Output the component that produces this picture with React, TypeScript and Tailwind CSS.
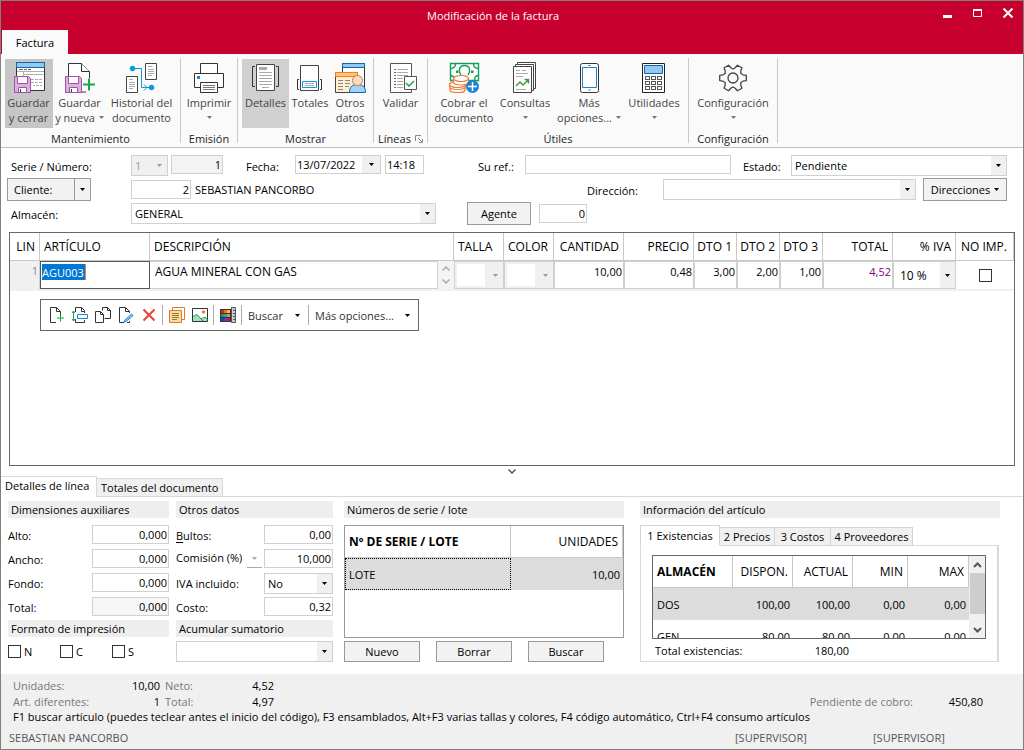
import React, { useState } from "react";

type IconProps = { children: React.ReactNode };

const Icon = ({ children }: IconProps) => (
  <svg width="32" height="32" viewBox="0 0 32 32" fill="none" strokeWidth="1" aria-hidden="true" className="shrink-0">
    {children}
  </svg>
);

const Arrow = ({ color = "#000" }: { color?: string }) => (
  <svg width="5" height="3" viewBox="0 0 5 3" aria-hidden="true" className="shrink-0">
    <path d="M0 0h5L2.5 3z" fill={color} />
  </svg>
);

const Floppy = () => (
  <g>
    <path d="M1.5 15.5h14l2 2v14h-16z" fill="#dfb0dd" stroke="#a052a8" />
    <path d="M4.5 15.5h10v7h-10z" fill="#fff" stroke="#a052a8" />
    <path d="M5.5 31.5v-5h8v5z" fill="#fff" stroke="#a052a8" />
    <path d="M7.5 28v3" stroke="#444" />
  </g>
);

const SaveCloseIcon = () => (
  <Icon>
    <path d="M3.5 1.5h28v28h-28z" fill="#fff" stroke="#333" />
    <path d="M3.5 1.5h28v5h-28z" fill="#92c9f0" stroke="#1565a8" />
    <path d="M6 8.5h4M11 8.5h3M15 8.5h3" stroke="#666" />
    <path d="M4 10.5h27M10.5 10.5v5M10.5 13.5h20" stroke="#b0b0b0" />
    <path d="M18 18.5h3M22 18.5h3M26 18.5h3M18 21.5h3M22 21.5h3M26 21.5h3M20 24.5h2M23 24.5h3M27 24.5h2" stroke="#aaa" />
    <Floppy />
  </Icon>
);

const SaveNewIcon = () => (
  <Icon>
    <path d="M4.5 2.5h13l8 8v20.5h-21z" fill="#fff" stroke="#333" />
    <path d="M17.5 2.5v8h8" fill="#fff" stroke="#333" />
    <path d="M19 21h13v5H19zM22 17h6v15h-6z" fill="#fafafa" />
    <Floppy />
    <path d="M19 23.5h12M25 17.5v12" stroke="#13a84b" strokeWidth="2" />
  </Icon>
);

const HistoryIcon = () => (
  <Icon>
    <path d="M19.5 2.5h11v16h-11zM.5 15.5h11v16H.5z" fill="#fff" stroke="#444" />
    <path d="M22 5.5h4M22 8.5h6M22 10.5h6M22 12.5h6M22 14.5h4M3 18.5h4M3 21.5h6M3 23.5h6M3 25.5h6M3 27.5h4" stroke="#aaa" />
    <path d="M7 7.5h8.5v19H26M18 23.5l3 3-3 3" stroke="#0a9be0" />
    <circle cx="6.5" cy="7.5" r="2.7" fill="#0a9be0" />
    <circle cx="25.5" cy="26.5" r="2.7" fill="#0a9be0" />
  </Icon>
);

const PrintIcon = () => (
  <Icon>
    <path d="M7.5 12.5v-10h17v10" fill="#fff" stroke="#333" />
    <path d="M1.5 12.5h29v14h-29z" fill="#fff" stroke="#333" />
    <path d="M7.5 21.5h17v10h-17z" fill="#fff" stroke="#333" />
    <path d="M10 24.5h12M10 26.5h12M10 28.5h12" stroke="#777" />
    <path d="M4 15h3v3H4z" fill="#1b84cf" />
  </Icon>
);

const DetailsIcon = () => (
  <Icon>
    <path d="M6.5 3.5h18v26h-18z" fill="#fff" stroke="#444" />
    <path d="M9 6h8v3H9z" fill="#aaa" />
    <path d="M9 11.5h13M9 14.5h13M9 17.5h13M9 20.5h13M9 23.5h13M12 26.5h7" stroke="#aaa" />
    <path d="M5 5.5H2.5v20H5M26 5.5h2.5v20H26" stroke="#333" />
  </Icon>
);

const TotalsIcon = () => (
  <Icon>
    <path d="M6.5 4.5h18v25h-18z" fill="#fff" stroke="#444" />
    <path d="M8.5 20.5h14v6h-14z" stroke="#0a9be0" />
    <path d="M11 22.5h9M11 24.5h9" stroke="#aaa" />
    <path d="M5 18.5H3.5v10H5M26 18.5h1.5v10H26" stroke="#333" />
  </Icon>
);

const OtherDataIcon = () => (
  <Icon>
    <path d="M8.5 2.5h22v26h-22z" fill="#fff" stroke="#333" />
    <path d="M8.5 2.5h22v4h-22z" fill="#92c9f0" stroke="#1565a8" />
    <path d="M1.5 11.5h22v20h-22z" fill="#fdf0d0" stroke="#444" />
    <path d="M1.5 11.5h22v4h-22z" fill="#fdc27e" stroke="#f08020" />
    <path d="M4 19.5h5M11 19.5h5M4 22.5h5M11 22.5h5M4 25.5h5M11 25.5h4M4 28.5h5" stroke="#888" />
    <path d="M15.5 31.5c0-6 3-8 8-8s8 2 8 8z" fill="#a8d0f2" stroke="#1565a8" />
    <circle cx="23.5" cy="19.5" r="5" fill="#fbdcc0" stroke="#b98052" />
  </Icon>
);

const ValidateIcon = () => (
  <Icon>
    <path d="M5.5 2.5h21v29h-21z" fill="#fff" stroke="#555" />
    <path d="M9 8.5h2M9 14.5h2M9 20.5h2M9 26.5h2" stroke="#13a84b" />
    <path d="M9 11.5h2M9 17.5h2M9 23.5h2" stroke="#c03030" />
    <path d="M12 8.5h11M12 11.5h11M12 14.5h11M12 17.5h6M12 20.5h6M12 23.5h6M12 26.5h6" stroke="#aaa" />
    <path d="M19.5 15.5h12v13h-12z" fill="#fff" stroke="#555" />
    <path d="M21 22l3 3 5-5" stroke="#13a84b" strokeWidth="1.5" />
  </Icon>
);

const CashIcon = () => (
  <Icon>
    <path d="M2.5 2.5h28v17h-28z" fill="#fff" stroke="#13a05a" strokeWidth="1.4" />
    <path
      d="M2.5 7.500c3 0 5-2 5-5M25.500 2.500c0 3 2 5 5 5M30.500 14.500c-3 0-4 2-4 5M2.500 14.500c2 0 3 1 4 3M13 14c-3-4-2-9.500 3.500-9.500S23 10 20 14"
      stroke="#13a05a"
      strokeWidth="1.4"
    />
    <path d="M8 9.500h2.500v2.500H8zM23 9.500h2.500v2.500H23z" fill="#13a05a" />
    <g fill="#fff" stroke="#ef7a3a" strokeWidth="1.200">
      <path d="M2 27v2c0 3 14 4 15 0v-2z" />
      <path d="M1.500 23v2.500c0 4 16 4 16 0V23z" />
      <ellipse cx="9.500" cy="23.500" rx="8" ry="3" />
      <path d="M5.500 17.500V21c0 4 15 4 15 0v-3.500z" />
      <ellipse cx="13" cy="17.500" rx="7.500" ry="3" />
    </g>
    <circle cx="24.500" cy="25.500" r="6.500" fill="#1b84cf" />
    <path d="M20 25.500h9M24.500 21v9" stroke="#fff" strokeWidth="1.500" />
  </Icon>
);

const QueriesIcon = () => (
  <Icon>
    <path d="M8.5 1.5h18v26h-18z" fill="#fff" stroke="#444" />
    <path d="M6.5 3.5h18v26h-18z" fill="#fff" stroke="#444" />
    <path d="M4.5 5.5h18v26h-18z" fill="#fff" stroke="#444" />
    <path d="M7 9.5h4M13 9.5h4M7 12.5h12M7 15.5h7M7 28.5h10" stroke="#aaa" />
    <path d="M7 25l4-4 3 3 5-5M15.5 18.5h4v4" stroke="#3a9a3a" strokeWidth="1.4" />
  </Icon>
);

const TabletIcon = () => (
  <Icon>
    <rect x="7.5" y="2.5" width="18" height="29" rx="2" fill="#fff" stroke="#333" />
    <path d="M9.5 6.5h14v20h-14z" fill="#fff" stroke="#1b84cf" />
    <path d="M15 4.5h3M15 29h3" stroke="#888" />
  </Icon>
);

const CalculatorIcon = () => (
  <Icon>
    <path d="M4.5 2.5h22v29h-22z" fill="#fff" stroke="#222" />
    <path d="M6.5 4.5h18v8h-18z" fill="#92c9f0" stroke="#1565a8" />
    {[15.5, 20.5, 25.5].map((y) =>
      [7.5, 13.5, 19.5].map((x) => (
        <rect key={`${x}-${y}`} x={x} y={y} width="4" height="3" stroke="#555" />
      ))
    )}
  </Icon>
);

const gearPoints = [0, 60, 120, 180, 240, 300]
  .flatMap((base) =>
    [
      [-30, 9],
      [-18, 10.5],
      [-11, 13.5],
      [11, 13.5],
      [18, 10.5],
    ].map(([offset, radius]) => {
      const angle = ((base + offset) * Math.PI) / 180;
      return `${(16 + radius * Math.cos(angle)).toFixed(1)},${(17 + radius * Math.sin(angle)).toFixed(1)}`;
    })
  )
  .join(" ");

const GearIcon = () => (
  <Icon>
    <polygon points={gearPoints} stroke="#444" strokeWidth="1.3" strokeLinejoin="round" />
    <circle cx="16" cy="17" r="5" stroke="#444" strokeWidth="1.3" />
  </Icon>
);

type RibbonButtonProps = {
  icon: React.ReactNode;
  lines: string[];
  width: string;
  active?: string;
  menu?: boolean;
};

const RibbonButton = ({ icon, lines, width, active = "", menu }: RibbonButtonProps) => (
  <button
    type="button"
    className={`flex h-[69px] shrink-0 flex-col items-center pt-[2px] leading-[15px] whitespace-nowrap text-[#444] ${width} ${active}`}
  >
    {icon}
    <span className="mt-[2px]">{lines[0]}</span>
    <span className="flex h-[15px] items-center gap-1">
      {lines[1]}
      {menu && <Arrow color="#777" />}
    </span>
  </button>
);

type RibbonGroupProps = {
  label: string;
  width: string;
  launcher?: boolean;
  children: React.ReactNode;
};

const RibbonGroup = ({ label, width, launcher, children }: RibbonGroupProps) => (
  <section aria-label={label} className={`my-1 flex shrink-0 flex-col border-r border-[#c8c8c8] pt-px ${width}`}>
    <div className="flex justify-center">{children}</div>
    <div className="mt-[3px] flex h-[15px] items-center justify-center gap-1 text-[#222]">
      {label}
      {launcher && (
        <svg width="8" height="8" viewBox="0 0 8 8" fill="none" stroke="#888" aria-hidden="true">
          <path d="M.5 6V.5H6M3 3l4 4M7.5 4v3.5H4" />
        </svg>
      )}
    </div>
  </section>
);

type SelectProps = {
  id?: string;
  label?: string;
  value: string;
  className: string;
  disabled?: boolean;
};

const Select = ({ id, label, value, className, disabled }: SelectProps) => (
  <div className={`relative h-[21px] border border-[#d0d0d0] ${disabled ? "bg-[#f0f0f0] text-[#999]" : "bg-white"} ${className}`}>
    <select
      id={id}
      aria-label={label}
      disabled={disabled}
      defaultValue={value}
      className="block h-full w-full appearance-none pr-4 pl-[3px] outline-none"
    >
      <option>{value}</option>
    </select>
    <span className="pointer-events-none absolute inset-y-0 right-0 flex w-[15px] items-center justify-center bg-[#f0f0f0]">
      <Arrow color={disabled ? "#999" : "#000"} />
    </span>
  </div>
);

type FieldProps = {
  id?: string;
  label?: string;
  value: string;
  className: string;
};

const Field = ({ id, label, value, className }: FieldProps) => (
  <input
    id={id}
    aria-label={label}
    defaultValue={value}
    className={`h-[19px] min-w-0 border border-[#d0d0d0] px-[1px] pb-px outline-none ${className}`}
  />
);

const PushButton = ({ children, className }: { children: React.ReactNode; className: string }) => (
  <button type="button" className={`flex items-center justify-center border border-[#999] bg-[#f2f2f2] ${className}`}>
    {children}
  </button>
);

const SectionTitle = ({ children }: { children: React.ReactNode }) => (
  <h2 className="h-[17px] bg-[#eee] pl-[3px] leading-[17px]">{children}</h2>
);

const TitleBar = () => (
  <header className="bg-[#c8002d] text-white">
    <div className="flex h-[29px] items-center pl-[52px]">
      <h1 className="flex-1 text-center">Modificación de la factura</h1>
      <div className="flex pb-[5px]">
        <button type="button" aria-label="Minimizar" className="flex h-6 w-[30px] items-center justify-center">
          <svg width="10" height="10" viewBox="0 0 10 10">
            <path d="M0 7h9v3H0z" fill="#fff" />
          </svg>
        </button>
        <button type="button" aria-label="Maximizar" className="flex h-6 w-[30px] items-center justify-center">
          <svg width="10" height="10" viewBox="0 0 10 10" fill="none" stroke="#fff">
            <path d="M.5 1.5h8v7h-8z" />
            <path d="M0 2h9" strokeWidth="2" />
          </svg>
        </button>
        <button type="button" aria-label="Cerrar" className="flex h-6 w-[30px] items-center justify-center">
          <svg width="10" height="10" viewBox="0 0 10 10" fill="none" stroke="#fff" strokeWidth="2">
            <path d="M.5.5l9 9M9.5.5l-9 9" />
          </svg>
        </button>
      </div>
    </div>
    <nav className="flex pl-px">
      <button type="button" className="h-6 w-[66px] bg-[#fafafa] text-black">
        Factura
      </button>
    </nav>
  </header>
);

const Ribbon = () => (
  <div className="flex h-[94px] border-b border-[#c0c0c0] bg-[#fafafa]">
    <RibbonGroup label="Mantenimiento" width="w-[180px]">
      <RibbonButton icon={<SaveCloseIcon />} lines={["Guardar", "y cerrar"]} width="w-12" active="bg-[#c6c6c6]" />
      <RibbonButton icon={<SaveNewIcon />} lines={["Guardar", "y nueva"]} width="w-[54px]" menu />
      <RibbonButton icon={<HistoryIcon />} lines={["Historial del", "documento"]} width="w-[70px]" />
    </RibbonGroup>
    <RibbonGroup label="Emisión" width="w-[57px]">
      <RibbonButton icon={<PrintIcon />} lines={["Imprimir", ""]} width="w-12" menu />
    </RibbonGroup>
    <RibbonGroup label="Mostrar" width="w-[136px]">
      <RibbonButton icon={<DetailsIcon />} lines={["Detalles", ""]} width="w-[47px]" active="bg-[#d0d0d0]" />
      <RibbonButton icon={<TotalsIcon />} lines={["Totales", ""]} width="w-[42px]" />
      <RibbonButton icon={<OtherDataIcon />} lines={["Otros", "datos"]} width="w-[38px]" />
    </RibbonGroup>
    <RibbonGroup label="Líneas" width="w-[54px]" launcher>
      <RibbonButton icon={<ValidateIcon />} lines={["Validar", ""]} width="w-12" />
    </RibbonGroup>
    <RibbonGroup label="Útiles" width="w-[261px]">
      <RibbonButton icon={<CashIcon />} lines={["Cobrar el", "documento"]} width="w-16" />
      <RibbonButton icon={<QueriesIcon />} lines={["Consultas", ""]} width="w-[58px]" menu />
      <RibbonButton icon={<TabletIcon />} lines={["Más", "opciones..."]} width="w-[70px]" menu />
      <RibbonButton icon={<CalculatorIcon />} lines={["Utilidades", ""]} width="w-[60px]" menu />
    </RibbonGroup>
    <RibbonGroup label="Configuración" width="w-[89px]">
      <RibbonButton icon={<GearIcon />} lines={["Configuración", ""]} width="w-20" menu />
    </RibbonGroup>
  </div>
);

const InvoiceForm = () => (
  <form className="flex flex-col gap-[3px] pt-[7px] pr-4 pb-2 pl-[10px]">
    <div className="flex h-[21px] items-start">
      <label htmlFor="serie" className="w-[120px] leading-[23px]">
        Serie / Número:
      </label>
      <Select id="serie" value="1" className="w-[37px]" disabled />
      <Field label="Número" value="1" className="ml-[3px] w-[52px] bg-[#f3f3f3] text-right" />
      <label htmlFor="fecha" className="ml-[23px] w-[49px] leading-[23px]">
        Fecha:
      </label>
      <div className="relative h-[19px] w-[86px] border border-[#d0d0d0]">
        <input id="fecha" defaultValue="13/07/2022" className="block h-[16px] w-full pl-px outline-none" />
        <span className="pointer-events-none absolute inset-y-0 right-0 flex w-[18px] items-center justify-center bg-[#f0f0f0]">
          <Arrow />
        </span>
      </div>
      <Field label="Hora" value="14:18" className="ml-1 w-[39px]" />
      <label htmlFor="ref" className="ml-[54px] w-[47px] leading-[23px]">
        Su ref.:
      </label>
      <Field id="ref" value="" className="flex-1" />
      <label htmlFor="estado" className="ml-3 w-12 leading-[23px]">
        Estado:
      </label>
      <Select id="estado" value="Pendiente" className="w-[216px]" />
    </div>
    <div className="flex h-[21px] items-center">
      <div className="-ml-1 flex h-[23px] w-[84px] border border-[#999] bg-[#f2f2f2]">
        <button type="button" className="flex-1 pl-[6px] text-left">
          Cliente:
        </button>
        <button type="button" aria-label="Opciones de cliente" className="flex w-4 items-center justify-center border-l border-[#999]">
          <Arrow />
        </button>
      </div>
      <Field label="Cliente" value="2" className="ml-10 w-[60px] text-right" />
      <span className="ml-1 w-[392px] pb-px">SEBASTIAN PANCORBO</span>
      <label htmlFor="direccion" className="w-[76px] pt-[2px]">
        Dirección:
      </label>
      <Select id="direccion" value="" className="flex-1" />
      <PushButton className="ml-[7px] h-[23px] w-[84px] gap-1">
        Direcciones
        <Arrow />
      </PushButton>
    </div>
    <div className="flex h-[21px] items-center">
      <label htmlFor="almacen" className="w-[120px] pt-[2px]">
        Almacén:
      </label>
      <Select id="almacen" value="GENERAL" className="w-[305px]" />
      <PushButton className="ml-[31px] h-[23px] w-16">Agente</PushButton>
      <Field label="Agente" value="0" className="ml-2 w-12 text-right" />
    </div>
  </form>
);

const columns = [
  { name: "LIN", width: "w-[30px]", align: "text-right pr-1" },
  { name: "ARTÍCULO", width: "w-[110px]", align: "text-left pl-1" },
  { name: "DESCRIPCIÓN", width: "", align: "text-left pl-1" },
  { name: "TALLA", width: "w-[50px]", align: "text-left pl-1" },
  { name: "COLOR", width: "w-[50px]", align: "text-left pl-1" },
  { name: "CANTIDAD", width: "w-[70px]", align: "text-right pr-1" },
  { name: "PRECIO", width: "w-[70px]", align: "text-right pr-1" },
  { name: "DTO 1", width: "w-[43px]", align: "text-right pr-1" },
  { name: "DTO 2", width: "w-[43px]", align: "text-right pr-1" },
  { name: "DTO 3", width: "w-[43px]", align: "text-right pr-1" },
  { name: "TOTAL", width: "w-[70px]", align: "text-right pr-1" },
  { name: "% IVA", width: "w-[63px]", align: "text-right pr-1" },
  { name: "NO IMP.", width: "w-[58px]", align: "text-right pr-[6px]" },
];

const amounts = [
  { name: "Cantidad", value: "10,00" },
  { name: "Precio", value: "0,48" },
  { name: "Descuento 1", value: "3,00" },
  { name: "Descuento 2", value: "2,00" },
  { name: "Descuento 3", value: "1,00" },
  { name: "Total", value: "4,52" },
];

const ToolIcon = ({ label, children }: { label: string; children: React.ReactNode }) => (
  <button type="button" aria-label={label} className="flex w-[23px] items-center justify-center">
    <svg width="16" height="16" viewBox="0 0 16 16" fill="none" strokeWidth="1">
      {children}
    </svg>
  </button>
);

const Separator = () => <span className="mx-[2px] my-[5px] w-px bg-[#aaa]" />;

const swatches = ["#e02020", "#f07020", "#f8c020", "#20a040", "#20a0c0", "#f09020", "#2040d0", "#7030b0", "#a02080"];

const LineToolbar = () => (
  <div role="toolbar" className="mt-2 ml-[30px] flex h-8 w-[379px] border border-[#666] bg-white pl-1 text-[#333]">
    <ToolIcon label="Nueva línea">
      <path d="M7 15.5H1.500V.5h6l4 4V8M7.500.5v4h4" stroke="#333" />
      <path d="M11.500 7.500v7M8 11h7" stroke="#13a84b" />
    </ToolIcon>
    <ToolIcon label="Insertar línea">
      <path d="M3.500 5V.5h6l3 3V6M9.500.5v4h3M3.500 12v3.500h9V13" stroke="#333" />
      <path d="M5.500 7.500h10v4h-10z" stroke="#1b84cf" />
      <path d="M1.500 4v10M0 6l1.500-2L3 6M0 12l1.500 2L3 12" stroke="#13a84b" />
    </ToolIcon>
    <ToolIcon label="Duplicar línea">
      <path d="M7.500 3.500V.5h5l3 3v8h-6M12.500.5v3h3M.5 4.500h5l3 3v8h-8zM5.500 4.500v3h3" stroke="#333" />
    </ToolIcon>
    <ToolIcon label="Editar línea">
      <path d="M6 15.500H1.500V.5h6l4 4V6M7.500.5v4h4M9 15.500h2.500V14" stroke="#333" />
      <path d="M6.500 13.500l7-6.500 1.500 1.500-7 6-2 .5z" fill="#92c9f0" stroke="#1b84cf" />
    </ToolIcon>
    <ToolIcon label="Eliminar línea">
      <path d="M2.500 2.500l11 11M13.500 2.500l-11 11" stroke="#e8403a" strokeWidth="2" />
    </ToolIcon>
    <Separator />
    <ToolIcon label="Observaciones">
      <path d="M3.500 3V.5h12v12H13" stroke="#e07a28" />
      <path d="M.5 3.500h12v12H.5z" fill="#fbdc9c" stroke="#e07a28" />
      <path d="M3 6.500h7M3 8.500h7M3 10.500h7M3 12.500h5" stroke="#8a7a50" />
    </ToolIcon>
    <ToolIcon label="Imagen">
      <path d="M.5 1.500h15v13H.5z" fill="#fff" stroke="#333" />
      <path d="M1 9.500l4-2 5 5 3-2.500 2 2V14H1z" fill="#a8dcb4" />
      <path d="M1 9.500l4-2 6 6.500M9 12l4-2 2.500 2.500" stroke="#13a05a" />
      <circle cx="11.500" cy="5" r="1.800" fill="#f08040" />
    </ToolIcon>
    <Separator />
    <ToolIcon label="Tallas y colores">
      <path d="M0 2h11v13H0z" fill="#333" />
      {swatches.map((color, index) => (
        <path key={color} d={`M${1 + (index % 3) * 3} ${3 + Math.floor(index / 3) * 4}h3v3h-3z`} fill={color} />
      ))}
      <path d="M11.500.5h4v15h-4z" fill="#ccc" stroke="#555" />
      <path d="M13 3.500h2M13 6.500h2M13 9.500h2M13 12.500h2" stroke="#555" />
    </ToolIcon>
    <Separator />
    <button type="button" className="flex w-[62px] items-center justify-between pr-[6px] pl-1">
      Buscar
      <Arrow />
    </button>
    <Separator />
    <button type="button" className="flex flex-1 items-center justify-between pr-2 pl-1">
      Más opciones...
      <Arrow />
    </button>
  </div>
);

const LinesTable = () => (
  <main className="mx-2 min-h-[233px] flex-1 border border-[#666]">
    <table className="w-full table-fixed border-separate border-spacing-0 text-[12px]">
      <thead>
        <tr className="h-[28px]">
          {columns.map((col) => (
            <th
              key={col.name}
              className={`border-r border-b border-[#c8c8c8] py-0 font-normal whitespace-nowrap ${col.width} ${col.align}`}
            >
              {col.name}
            </th>
          ))}
        </tr>
      </thead>
      <tbody className="[&_td]:border-b-2 [&_td]:border-b-[#f0f0f0] [&_td]:p-0">
        <tr className="align-top">
          <td>
            <div className="h-7 border-r border-[#d0d0d0] bg-[#f0f0f0] pr-px text-right text-[11px] leading-[20px] text-[#888]">1</div>
          </td>
          <td>
            <div className="flex h-7 items-start border border-[#555] pt-[2px] pl-px">
              <input
                aria-label="Artículo"
                defaultValue="AGU003"
                className="h-[16px] w-[44px] border-r border-[#f08030] bg-[#0078d7] text-[11px] text-white outline-none"
              />
            </div>
          </td>
          <td>
            <div className="flex h-7">
              <input
                aria-label="Descripción"
                defaultValue="AGUA MINERAL CON GAS"
                className="h-7 min-w-0 flex-1 border border-l-0 border-[#d0d0d0] pb-[7px] pl-[5px] outline-none"
              />
              <span className="flex w-4 flex-col items-center justify-center gap-2 bg-[#f4f4f4]">
                <svg width="8" height="5" viewBox="0 0 8 5" fill="none" stroke="#aaa" strokeWidth="1.5">
                  <path d="M.5 4.5L4 1l3.5 3.5" />
                </svg>
                <svg width="8" height="5" viewBox="0 0 8 5" fill="none" stroke="#aaa" strokeWidth="1.5">
                  <path d="M.5.5L4 4 7.5.5" />
                </svg>
              </span>
            </div>
          </td>
          {["Talla", "Color"].map((name) => (
            <td key={name}>
              <div className="flex h-7 items-center justify-between border border-[#d0d0d0] bg-[#f0f0f0] pr-[5px] pl-[2px]">
                <select aria-label={name} disabled className="h-[22px] w-7 appearance-none bg-white" />
                <Arrow color="#999" />
              </div>
            </td>
          ))}
          {amounts.map((amount) => (
            <td key={amount.name}>
              <div className="h-7 border border-[#d0d0d0]">
                <input
                  aria-label={amount.name}
                  defaultValue={amount.value}
                  className={`block h-[18px] w-full pr-px text-right text-[11px] outline-none ${
                    amount.name === "Total" ? "text-[#800080]" : ""
                  }`}
                />
              </div>
            </td>
          ))}
          <td>
            <div className="relative h-7 border border-[#d0d0d0]">
              <select aria-label="% IVA" className="block h-full w-full appearance-none pl-[6px] outline-none">
                <option>10 %</option>
              </select>
              <span className="pointer-events-none absolute inset-y-0 right-0 flex w-[15px] items-center justify-center bg-[#f0f0f0]">
                <Arrow />
              </span>
            </div>
          </td>
          <td>
            <div className="flex h-7 items-center justify-center">
              <input type="checkbox" aria-label="No imprimir" className="h-[13px] w-[13px] appearance-none border border-[#333]" />
            </div>
          </td>
        </tr>
      </tbody>
    </table>
    <LineToolbar />
  </main>
);

const dimensions = [
  { id: "alto", label: "Alto:", bg: "" },
  { id: "ancho", label: "Ancho:", bg: "" },
  { id: "fondo", label: "Fondo:", bg: "" },
  { id: "total", label: "Total:", bg: "bg-[#f6f6f6]" },
];

const Dimensions = () => (
  <section className="w-[161px]">
    <SectionTitle>Dimensiones auxiliares</SectionTitle>
    <div className="flex flex-col gap-[5px] pt-[7px]">
      {dimensions.map((item) => (
        <div key={item.id} className="flex h-[19px] justify-between">
          <label htmlFor={item.id} className="leading-[22px]">
            {item.label}
          </label>
          <Field id={item.id} value="0,000" className={`w-[77px] text-right ${item.bg}`} />
        </div>
      ))}
    </div>
    <div className="pt-1">
      <SectionTitle>Formato de impresión</SectionTitle>
    </div>
    <div className="flex pt-[7px]">
      {["N", "C", "S"].map((name) => (
        <label key={name} className="flex w-[52px] items-center gap-[3px]">
          <input type="checkbox" className="h-[13px] w-[13px] appearance-none border border-[#333]" />
          {name}
        </label>
      ))}
    </div>
  </section>
);

const OtherData = () => (
  <section className="ml-[7px] w-[157px]">
    <SectionTitle>Otros datos</SectionTitle>
    <div className="flex flex-col gap-[5px] pt-[7px]">
      <div className="flex h-[19px] justify-between">
        <label htmlFor="bultos" className="leading-[22px]">
          <u className="underline-offset-2">B</u>ultos:
        </label>
        <Field id="bultos" value="0,00" className="w-[69px] text-right" />
      </div>
      <div className="flex h-[19px]">
        <label htmlFor="comision" className="flex-1 leading-[18px] whitespace-nowrap">
          Comisión (%)
        </label>
        <button type="button" aria-label="Tipo de comisión" className="mr-[2px] flex w-[15px] items-center justify-center border-b border-[#aaa]">
          <Arrow color="#aaa" />
        </button>
        <Field id="comision" value="10,000" className="w-[69px] text-right" />
      </div>
      <div className="flex h-[19px] justify-between">
        <label htmlFor="iva" className="leading-[22px]">
          IVA incluido:
        </label>
        <Select id="iva" value="No" className="w-[69px]" />
      </div>
      <div className="flex h-[19px] justify-between">
        <label htmlFor="costo" className="leading-[22px]">
          Costo:
        </label>
        <Field id="costo" value="0,32" className="w-[69px] text-right" />
      </div>
    </div>
    <div className="pt-1">
      <SectionTitle>Acumular sumatorio</SectionTitle>
    </div>
    <Select label="Acumular sumatorio" value="" className="mt-1" />
  </section>
);

const SerialNumbers = () => (
  <section className="ml-[11px] w-[280px]">
    <SectionTitle>Números de serie / lote</SectionTitle>
    <div className="mt-[7px] h-[113px] border border-[#999]">
      <table className="w-full table-fixed border-separate border-spacing-0 text-[12px]">
        <thead>
          <tr className="h-8">
            <th className="w-[166px] border-r border-b border-[#c8c8c8] py-0 pr-0 pl-1 text-left font-bold">Nº DE SERIE / LOTE</th>
            <th className="border-r border-b border-[#c8c8c8] py-0 pr-1 text-right font-normal">UNIDADES</th>
          </tr>
        </thead>
        <tbody>
          <tr className="h-8 bg-[#dcdcdc]">
            <td className="border border-dotted border-black p-0 pl-[3px] text-[11px]">LOTE</td>
            <td className="p-0 pr-[3px] text-right text-[11px]">10,00</td>
          </tr>
        </tbody>
      </table>
    </div>
    <div className="mt-[3px] flex gap-4">
      {["Nuevo", "Borrar", "Buscar"].map((name) => (
        <PushButton key={name} className="h-[21px] w-[76px]">
          {name}
        </PushButton>
      ))}
    </div>
  </section>
);

const stockColumns = [
  { name: "ALMACÉN", style: "w-[80px] pl-1 text-left font-bold" },
  { name: "DISPON.", style: "w-[60px] pr-1 text-right font-normal" },
  { name: "ACTUAL", style: "w-[60px] pr-1 text-right font-normal" },
  { name: "MIN", style: "w-[55px] pr-1 text-right font-normal" },
  { name: "MAX", style: "pr-1 text-right font-normal" },
];

const stock = [
  ["DOS", "100,00", "100,00", "0,00", "0,00"],
  ["GEN", "80,00", "80,00", "0,00", "0,00"],
];

const infoTabs = [
  { name: "1 Existencias", width: "w-[80px]", height: "h-[19px]" },
  { name: "2 Precios", width: "w-[55px]", height: "h-[19px]" },
  { name: "3 Costos", width: "w-[56px]", height: "h-[19px]" },
  { name: "4 Proveedores", width: "w-[82px]", height: "h-[19px]" },
];

const ArticleInfo = () => {
  const [active, setActive] = useState(0);

  return (
    <section className="ml-4 flex-1">
      <SectionTitle>Información del artículo</SectionTitle>
      <div role="tablist" className="relative z-10 mt-[7px] -mb-px flex h-[21px] items-end">
        {infoTabs.map((tab, index) => (
          <button
            key={tab.name}
            type="button"
            role="tab"
            aria-selected={index === active}
            onClick={() => setActive(index)}
            className={`border border-[#d4d4d4] whitespace-nowrap ${tab.width} ${
              index === active ? "h-[21px] border-b-white bg-white pb-px" : `border-l-0 bg-[#f0f0f0] ${tab.height}`
            }`}
          >
            {tab.name}
          </button>
        ))}
      </div>
      <div className="mr-px border border-r-2 border-[#d9d9d9] px-[11px] pt-[9px]">
        <div className="flex h-[84px] overflow-hidden border border-[#666]">
          <table className="h-[95px] flex-1 table-fixed border-separate border-spacing-0 text-[12px]">
            <thead>
              <tr className="h-8">
                {stockColumns.map((col) => (
                  <th key={col.name} className={`border-r border-b border-[#c8c8c8] py-0 ${col.style}`}>
                    {col.name}
                  </th>
                ))}
              </tr>
            </thead>
            <tbody className="text-[11px]">
              {stock.map((row) => (
                <tr key={row[0]} className="h-8 first:bg-[#dcdcdc]">
                  {row.map((cell, index) => (
                    <td key={index} className={index === 0 ? "p-0 pl-1" : "p-0 pr-[3px] text-right"}>
                      {cell}
                    </td>
                  ))}
                </tr>
              ))}
            </tbody>
          </table>
          <div className="flex w-4 flex-col items-center bg-[#f0f0f0]">
            <svg width="9" height="17" viewBox="0 0 9 17" fill="none" stroke="#555" strokeWidth="2">
              <path d="M1 11l3.5-3.5L8 11" />
            </svg>
            <span className="h-[41px] w-[15px] bg-[#cdcdcd]" />
            <svg width="9" height="24" viewBox="0 0 9 24" fill="none" stroke="#555" strokeWidth="2">
              <path d="M1 14l3.5 3.5L8 14" />
            </svg>
          </div>
        </div>
        <div className="flex h-[22px] items-center pl-[3px]">
          <span className="w-[150px]">Total existencias:</span>
          <span className="w-[44px] text-right">180,00</span>
        </div>
      </div>
    </section>
  );
};

const detailTabs = [
  { name: "Detalles de línea", width: "w-24" },
  { name: "Totales del documento", width: "w-[126px]" },
];

const DetailPanel = () => {
  const [active, setActive] = useState(0);

  return (
    <div>
      <div className="flex h-[10px] items-center justify-center">
        <svg width="8" height="5" viewBox="0 0 8 5" fill="none" stroke="#555" strokeWidth="1.5">
          <path d="M.5.5L4 4 7.5.5" />
        </svg>
      </div>
      <div role="tablist" className="flex h-[21px] items-end border-b border-[#d9d9d9]">
        {detailTabs.map((tab, index) => (
          <button
            key={tab.name}
            type="button"
            role="tab"
            aria-selected={index === active}
            onClick={() => setActive(index)}
            className={`border-t border-r border-[#d9d9d9] pl-1 text-left whitespace-nowrap ${tab.width} ${
              index === active ? "-mb-px h-[21px] bg-white pb-[3px]" : "h-[18px] bg-[#f0f0f0]"
            }`}
          >
            {tab.name}
          </button>
        ))}
      </div>
      <div className="flex h-[177px] items-start pt-1 pr-[23px] pl-[7px]">
        <Dimensions />
        <OtherData />
        <SerialNumbers />
        <ArticleInfo />
      </div>
    </div>
  );
};

const StatusBar = () => (
  <footer className="h-[75px] bg-[#f0f0f0] pt-[3px] pr-[40px] pl-3">
    <div className="flex h-4 items-center">
      <span className="w-[100px] text-[#777]">Unidades:</span>
      <span className="w-[47px] text-right">10,00</span>
      <span className="ml-[5px] w-[60px] text-[#777]">Neto:</span>
      <span className="w-[49px] text-right">4,52</span>
    </div>
    <div className="flex h-4 items-center">
      <span className="w-[100px] text-[#777]">Art. diferentes:</span>
      <span className="w-[47px] text-right">1</span>
      <span className="ml-[5px] w-[60px] text-[#777]">Total:</span>
      <span className="w-[49px] text-right">4,97</span>
      <span className="ml-auto text-[#777]">Pendiente de cobro:</span>
      <span className="w-[70px] text-right">450,80</span>
    </div>
    <p className="h-4 leading-[16px] whitespace-nowrap">
      F1 buscar artículo (puedes teclear antes el inicio del código), F3 ensamblados, Alt+F3 varias tallas y colores, F4 código
      automático, Ctrl+F4 consumo artículos
    </p>
    <div className="-ml-1 flex h-6 items-center text-[#555]">
      <span className="flex-1">SEBASTIAN PANCORBO</span>
      <span className="w-[138px]">[SUPERVISOR]</span>
      <span className="w-[110px]">[SUPERVISOR]</span>
    </div>
  </footer>
);

const App = () => (
  <div className="flex min-h-screen min-w-[1024px] flex-col border border-[#808080] bg-white font-['Open_Sans','Noto_Sans',sans-serif] text-[11px] leading-[15px] text-black">
    <TitleBar />
    <Ribbon />
    <InvoiceForm />
    <LinesTable />
    <DetailPanel />
    <StatusBar />
  </div>
);

export default App;
